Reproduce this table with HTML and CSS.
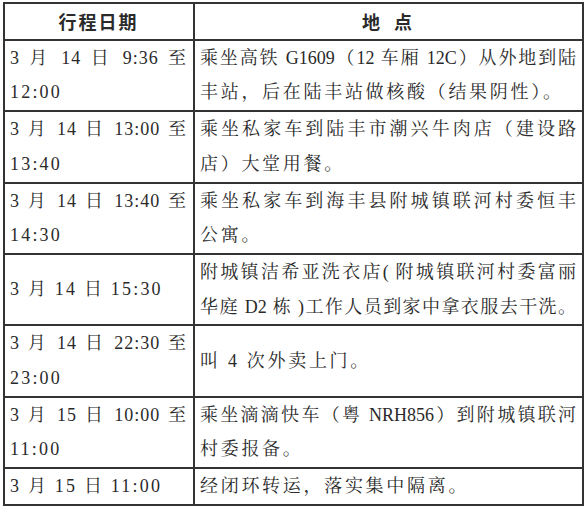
FILE: index.html
```html
<!DOCTYPE html>
<html lang="zh-CN">
<head>
<meta charset="utf-8">
<title>行程</title>
<link rel="stylesheet" href="styles.css">
</head>
<body>
<table class="trip">
  <colgroup><col class="c-date"><col class="c-place"></colgroup>
  <thead>
    <tr>
      <th>行程日期</th>
      <th>地&nbsp;&nbsp;点</th>
    </tr>
  </thead>
  <tbody>
    <tr>
      <td class="date"><div class="j">3 月 14 日 9:36 至</div><div>12:00</div></td>
      <td class="place"><div class="j">乘坐高铁 G1609（12 车厢 12C）从外地到陆</div><div>丰站，后在陆丰站做核酸（结果阴性）。</div></td>
    </tr>
    <tr>
      <td class="date"><div class="j">3 月 14 日 13:00 至</div><div>13:40</div></td>
      <td class="place"><div class="j">乘坐私家车到陆丰市潮兴牛肉店（建设路</div><div>店）大堂用餐。</div></td>
    </tr>
    <tr>
      <td class="date"><div class="j">3 月 14 日 13:40 至</div><div>14:30</div></td>
      <td class="place"><div class="j">乘坐私家车到海丰县附城镇联河村委恒丰</div><div>公寓。</div></td>
    </tr>
    <tr>
      <td class="date"><div>3 月 14 日 15:30</div></td>
      <td class="place"><div class="j">附城镇洁希亚洗衣店( 附城镇联河村委富丽</div><div class="j">华庭 D2 栋 )工作人员到家中拿衣服去干洗。</div></td>
    </tr>
    <tr>
      <td class="date"><div class="j">3 月 14 日 22:30 至</div><div>23:00</div></td>
      <td class="place"><div>叫 4 次外卖上门。</div></td>
    </tr>
    <tr>
      <td class="date"><div class="j">3 月 15 日 10:00 至</div><div>11:00</div></td>
      <td class="place"><div class="j">乘坐滴滴快车（粤 NRH856）到附城镇联河</div><div>村委报备。</div></td>
    </tr>
    <tr>
      <td class="date"><div>3 月 15 日 11:00</div></td>
      <td class="place"><div>经闭环转运，落实集中隔离。</div></td>
    </tr>
  </tbody>
</table>
</body>
</html>
```
FILE: styles.css
```css
html, body {
  margin: 0;
  padding: 0;
  background: #ffffff;
}

.trip {
  margin: 2px 0 0 3px;
  width: 579px;
  table-layout: fixed;
  border-collapse: collapse;
  color: #2a2a2a;
  font-family: "Liberation Serif", "Noto Serif CJK SC", "Noto Sans CJK SC", serif;
  font-size: 18px;
  letter-spacing: 2.2px;
}

.c-date { width: 190px; }
.c-place { width: 389px; }

.trip th,
.trip td {
  border: 2px solid #333333;
  line-height: 34.7px;
  vertical-align: middle;
  padding: 0 6px 0 5px;
  text-align: left;
}

.trip th {
  font-family: "Noto Sans CJK SC", sans-serif;
  font-weight: bold;
  text-align: center;
  letter-spacing: 2px;
  font-size: 18px;
}

.trip td div {
  white-space: nowrap;
}

.trip td.place div {
  letter-spacing: 2.7px;
}

.trip td div.j,
.trip td.place div.j {
  letter-spacing: 0;
  text-align: justify;
  text-align-last: justify;
  white-space: normal;
}

.trip td.date div.j {
  letter-spacing: 1px;
}
```
